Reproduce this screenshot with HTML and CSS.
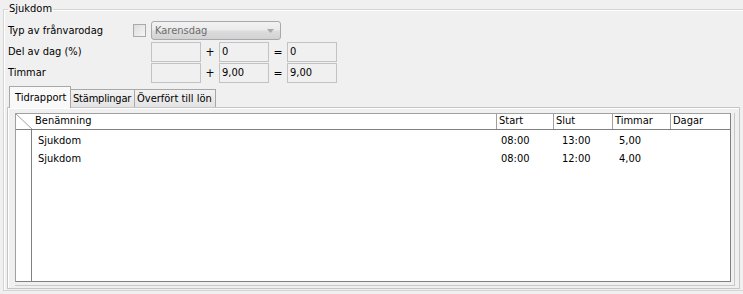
FILE: index.html
```html
<!DOCTYPE html>
<html lang="sv">
<head>
    <meta charset="UTF-8">
    <title>Sjukdom</title>
    <link rel="stylesheet" href="styles.css">
</head>
<body>
    <fieldset class="group">
        <legend>Sjukdom</legend>

        <div class="row">
            <span class="label short">Typ av frånvarodag</span>
            <span class="check"></span>
            <div class="combo">
                <span>Karensdag</span>
                <svg class="arrow" width="7" height="4" viewBox="0 0 7 4"><path d="M0 0h7L3.5 4z" fill="#a8a8a8"/></svg>
            </div>
        </div>
        <div class="row">
            <span class="label">Del av dag (%)</span>
            <span class="box"></span>
            <span class="op">+</span>
            <span class="box">0</span>
            <span class="op">=</span>
            <span class="box">0</span>
        </div>
        <div class="row">
            <span class="label">Timmar</span>
            <span class="box"></span>
            <span class="op">+</span>
            <span class="box">9,00</span>
            <span class="op">=</span>
            <span class="box">9,00</span>
        </div>

        <div class="tabs">
            <span class="tab active">Tidrapport</span>
            <span class="tab stamp">Stämplingar</span>
            <span class="tab lon">Överfört till lön</span>
        </div>
        <div class="panel">
            <div class="grid-frame">
                <div class="grid">
                    <div class="head-row">
                        <div class="corner">
                            <svg width="16" height="15" viewBox="0 0 16 15"><path d="M0 0L16 15" stroke="#a0a0a0" stroke-width="1"/></svg>
                        </div>
                        <div class="head first">Benämning</div>
                        <div class="head">Start</div>
                        <div class="head">Slut</div>
                        <div class="head">Timmar</div>
                        <div class="head">Dagar</div>
                    </div>
                    <div class="body">
                        <div class="side"></div>
                        <div class="rows">
                            <div class="data-row">
                                <span class="name">Sjukdom</span>
                                <span class="val">08:00</span>
                                <span class="val slut">13:00</span>
                                <span class="val tim">5,00</span>
                                <span class="val"></span>
                            </div>
                            <div class="data-row">
                                <span class="name">Sjukdom</span>
                                <span class="val">08:00</span>
                                <span class="val slut">12:00</span>
                                <span class="val tim">4,00</span>
                                <span class="val"></span>
                            </div>
                        </div>
                    </div>
                </div>
            </div>
        </div>
    </fieldset>
</body>
</html>
```

FILE: styles.css
```css
body {
    margin: 0;
    background: #f0f0f0;
    font-family: "DejaVu Sans Condensed", "DejaVu Sans", sans-serif;
    font-stretch: condensed;
    font-size: 11px;
    color: #000;
}
.group {
    margin: 0 0 0 3px;
    padding: 2px 0 1px 3px;
    border: 1px solid #d5d5d5;
    border-right: none;
    box-shadow: inset 1px 1px 0 #fff;
}
.group legend {
    padding: 0 1px;
    margin-left: 1px;
    line-height: 18px;
}
.row {
    display: flex;
    align-items: center;
    height: 21px;
}
.label {
    width: 143px;
    padding-left: 1px;
}
.label.short {
    width: 125px;
}
.check {
    width: 11px;
    height: 11px;
    border: 1px solid #a9a9a9;
    background: linear-gradient(135deg, #dcdcdc, #f6f6f6);
    margin-right: 5px;
}
.combo {
    width: 119px;
    height: 17px;
    border: 1px solid #a5a9ad;
    border-radius: 3px;
    background: linear-gradient(#f2f2f2, #ebebeb 45%, #dcdcdc 55%, #d2d2d2);
    display: flex;
    align-items: center;
    justify-content: space-between;
    padding: 0 6px 0 3px;
    color: #6d6d6d;
}
.box {
    width: 46px;
    height: 18px;
    line-height: 18px;
    padding-left: 2px;
    border: 1px solid #c3c3c3;
    background: #f0f0f0;
}
.op {
    width: 18px;
    text-align: center;
    font-size: 12px;
}
.tabs {
    display: flex;
    align-items: flex-end;
    height: 24px;
    padding-left: 2px;
}
.tab {
    height: 18px;
    line-height: 18px;
    padding-left: 2px;
    box-sizing: border-box;
    border: 1px solid #a8a8a8;
    border-bottom: none;
    border-left: none;
    background: linear-gradient(#f2f2f2, #e4e4e4);
    white-space: nowrap;
    overflow: hidden;
}
.tab.stamp {
    width: 64px;
    letter-spacing: -0.2px;
}
.tab.lon {
    width: 81px;
}
.tab.active {
    width: 62px;
    height: 22px;
    line-height: 21px;
    padding-left: 5px;
    border-left: 1px solid #a8a8a8;
    background: #f9f9f9;
    position: relative;
    top: 1px;
}
.panel {
    width: 720px;
    height: 173px;
    border: 1px solid #c6c6c6;
    padding: 5px 4px 2px 7px;
    box-shadow: inset 1px 1px 0 #fff;
}
.grid-frame {
    height: 169px;
    border: 1px solid #c8c8c8;
    border-top: none;
    border-left: none;
    padding: 0 3px 3px 0;
}
.grid {
    display: flex;
    flex-direction: column;
    width: 714px;
    height: 167px;
    background: #fff;
    border: 1px solid #a0a0a0;
    border-right-color: #808080;
    border-bottom-color: #808080;
}
.head-row {
    display: grid;
    grid-template-columns: 16px 464px 57px 59px 58px 60px;
    height: 15px;
    border-bottom: 1px solid #808080;
}
.corner {
    line-height: 0;
}
.head {
    border-left: 1px solid #a0a0a0;
    padding-left: 2px;
    line-height: 14px;
}
.head.first {
    border-left: none;
    padding-left: 3px;
}
.body {
    flex: 1;
    display: flex;
}
.side {
    width: 15px;
    border-right: 1px solid #808080;
}
.rows {
    padding-top: 2px;
}
.data-row {
    display: grid;
    grid-template-columns: 464px 57px 59px 58px 60px;
    height: 18px;
    line-height: 18px;
}
.name {
    padding-left: 6px;
}
.val {
    padding-left: 5px;
}
.val.slut {
    padding-left: 9px;
}
.val.tim {
    padding-left: 7px;
}
```
